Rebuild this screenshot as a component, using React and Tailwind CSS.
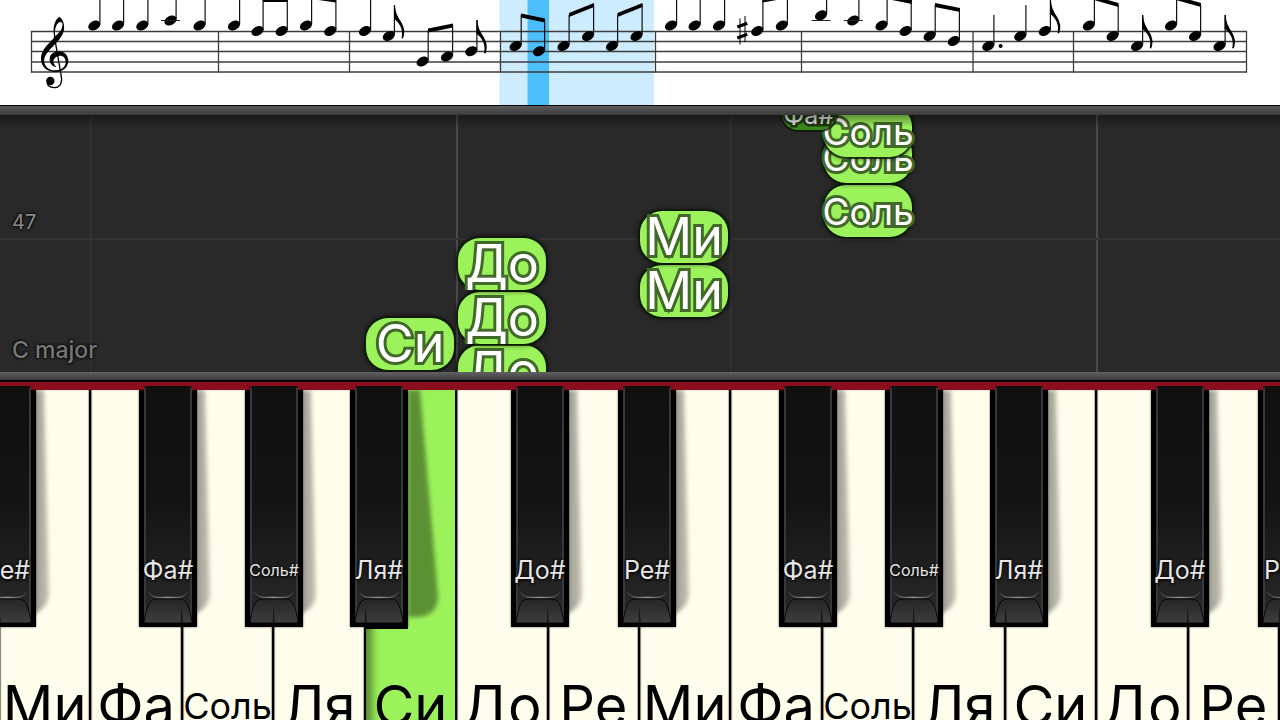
import React from "react";

const BAR_LINES = [31.5, 218.5, 349.5, 500.5, 655.5, 801.5, 973, 1073.5, 1246.5];
const STAFF_LINES = [31.5, 41.5, 51.5, 62, 72];

// x and y of the head, y of the stem top, optional flag, ledger line or dot
const NOTES = [
  { x: 94.3, y: 25.5, top: -5 },
  { x: 118, y: 25.5, top: -5 },
  { x: 142.3, y: 25.5, top: -5 },
  { x: 170.5, y: 20.5, top: -5, ledger: 20.5 },
  { x: 199.5, y: 25.5, top: -5 },
  { x: 234, y: 25.5, top: -5 },
  { x: 257.5, y: 31, top: 0 },
  { x: 281.7, y: 31, top: 0 },
  { x: 306, y: 25.5, top: -5 },
  { x: 330.3, y: 31, top: 0 },
  { x: 365, y: 31, top: -5 },
  { x: 388.8, y: 36, top: 5, flag: true },
  { x: 422.6, y: 61.5, top: 30 },
  { x: 447, y: 56.5, top: 25 },
  { x: 471.3, y: 51.2, top: 20, flag: true },
  { x: 515.6, y: 46, top: 15 },
  { x: 539, y: 51.2, top: 20 },
  { x: 563.5, y: 46, top: 15 },
  { x: 588, y: 36, top: 5 },
  { x: 612, y: 46, top: 15 },
  { x: 636.5, y: 36, top: 5 },
  { x: 671, y: 25.5, top: -5 },
  { x: 694.6, y: 25.5, top: -5 },
  { x: 719, y: 25.5, top: -5 },
  { x: 757.3, y: 31, top: 0 },
  { x: 781.8, y: 25.5, top: -5 },
  { x: 821, y: 15.3, top: -5, ledger: 20.5 },
  { x: 853.3, y: 20.5, top: -5, ledger: 20.5 },
  { x: 881.5, y: 25.5, top: -5 },
  { x: 905.6, y: 31, top: 0 },
  { x: 929.6, y: 36, top: 5 },
  { x: 953.8, y: 41, top: 10 },
  { x: 988.3, y: 46, top: 15, dot: true },
  { x: 1020.3, y: 36, top: 5 },
  { x: 1044.8, y: 31, top: 0, flag: true },
  { x: 1088.8, y: 25.5, top: -5 },
  { x: 1112.6, y: 36, top: 5 },
  { x: 1137, y: 46, top: 15, flag: true },
  { x: 1171, y: 25.5, top: -5 },
  { x: 1195, y: 36, top: 5 },
  { x: 1219.5, y: 46, top: 15, flag: true },
];

const BEAMS = [
  [263, -2, 288, -2],
  [311.5, -5, 336, -1.5],
  [428, 28.5, 453, 23.5],
  [521, 13.5, 545, 18.5],
  [569, 13, 594, 3],
  [617.5, 13, 642.5, 3],
  [762.5, -1.5, 788, -6],
  [887, -5, 912, 0],
  [935, 3, 960, 8],
  [1094, -4, 1118.5, 3],
  [1176, -4, 1201, 3],
];

function TrebleClef() {
  return (
    <g transform="scale(0.3333)">
      <path
        fillRule="evenodd"
        d="M163 112 C157 85 163 60 178 50 C190 58 194 76 192 88 C189 110 172 126 158 140 C140 157 130 172 133 188 C137 204 152 212 168 211 C186 210 197 200 197 186 C197 172 186 166 177 168 C163 170 158 182 161 190 C163 196 168 199 168 201 C158 199 148 190 149 176 C150 163 162 154 177 154 C194 154 206 168 205 184 C204 203 188 216 166 216 C142 216 123 200 123 176 C123 156 135 142 148 128 C155 121 161 115 163 112 Z M166 108 C162 88 169 66 183 66 C190 68 188 82 183 90 C179 97 172 103 166 108 Z"
      />
      <path d="M163 108 L184 230 C188 252 176 264 162 263 C150 262 142 256 141 246" fill="none" stroke="#000" strokeWidth="4" />
      <circle cx="151" cy="243" r="12.5" />
    </g>
  );
}

function Score() {
  return (
    <svg viewBox="0 0 1280 105" className="block h-auto w-full shrink-0 bg-white" role="img" aria-label="Ноты">
      <rect x="499.5" y="0" width="154.5" height="105" fill="#cdecff" />
      <rect x="527.5" y="0" width="21.5" height="105" fill="#4cbffb" />
      <g stroke="#3c3c3c" strokeWidth="1.3">
        {STAFF_LINES.map((y) => (
          <line key={y} x1="31" x2="1247" y1={y} y2={y} />
        ))}
        {BAR_LINES.map((x) => (
          <line key={x} x1={x} x2={x} y1="31" y2="72.5" />
        ))}
      </g>
      <TrebleClef />
      {BEAMS.map(([x1, y1, x2, y2]) => (
        <polygon key={x1} points={`${x1},${y1} ${x2},${y2} ${x2},${y2 + 4} ${x1},${y1 + 4}`} />
      ))}
      {NOTES.map((n) => (
        <g key={n.x}>
          <ellipse cx={n.x} cy={n.y} rx="6.4" ry="4.6" transform={`rotate(-27 ${n.x} ${n.y})`} />
          <line x1={n.x + 5.6} x2={n.x + 5.6} y1={n.y - 1} y2={n.top} stroke="#111" strokeWidth="1.2" />
          {n.ledger && <line x1={n.x - 9.5} x2={n.x + 9.5} y1={n.ledger} y2={n.ledger} stroke="#222" strokeWidth="1" />}
          {n.dot && <circle cx={n.x + 12.3} cy={n.y} r="2" />}
          {n.flag && (
            <path
              transform={`translate(${n.x + 5.2} ${n.top})`}
              d="M0 0 H1 C1.500 8 3.500 11 6.500 16 C11 23 11 28 9 33.500 L7.500 33 C9 27 7.500 22 4 17.500 C2.500 15.500 1 14.500 0 14 Z"
            />
          )}
        </g>
      ))}
      <g stroke="#000">
        <path d="M740 18.500 V44.500 M745 16 V42" strokeWidth="1" />
        <path d="M737.300 27 L747.300 23.300 M737.300 38 L747.300 34.300" strokeWidth="3.2" />
      </g>
    </svg>
  );
}

// Earliest note first: later notes lie over earlier ones.
const FALLING = [
  { text: "До", left: 458, top: 230, size: "text-[52px]" },
  { text: "Си", left: 366, top: 203, size: "text-[52px]" },
  { text: "До", left: 458, top: 177, size: "text-[52px]" },
  { text: "До", left: 458, top: 123, size: "text-[52px]" },
  { text: "Ми", left: 640, top: 150, size: "text-[52px]" },
  { text: "Ми", left: 640, top: 96, size: "text-[52px]" },
  { text: "Соль", left: 824, top: 70, size: "text-[37px]" },
  { text: "Соль", left: 824, top: 16, size: "text-[37px]" },
  { text: "Соль", left: 824, top: -10, size: "text-[37px]" },
];

function Guide({ x, strong }) {
  return (
    <div
      className={strong ? "absolute inset-y-0 w-0.5 bg-[#4a4a4a]" : "absolute inset-y-0 w-0.5 bg-[#303030]"}
      style={{ left: `${(x / 1280) * 100}%` }}
    />
  );
}

function PianoRoll() {
  return (
    <section className="relative h-[257px] shrink-0 overflow-hidden bg-[#292929]">
      <Guide x={89.5} />
      <Guide x={455.5} strong />
      <Guide x={729.5} />
      <Guide x={1095.5} strong />
      <div className="absolute inset-x-0 top-[123px] h-0.5 bg-[#333]" />
      <div className="relative flex h-full flex-col justify-end gap-[100px] pb-2 pl-3 leading-7 [text-shadow:0_0_3px_#000,0_0_3px_#000]">
        <p className="text-xl text-[#8c8c8c]">47</p>
        <p className="text-[23px] font-medium text-[#777]">C major</p>
      </div>
      {FALLING.map((n) => (
        <div
          key={`${n.left}-${n.top}`}
          className="absolute h-[52px] w-[6.9%] rounded-[22px] bg-[#9bf25a] shadow-[0_0_0_2px_rgba(10,25,0,0.75),0_0_4px_2px_rgba(0,0,0,0.5)]"
          style={{ left: `${(n.left / 1280) * 100}%`, top: n.top }}
        >
          <span
            className={`flex h-[52px] items-center justify-center overflow-y-clip whitespace-nowrap leading-none text-white [-webkit-text-stroke:6px_#41692a] [paint-order:stroke_fill] ${n.size}`}
          >
            {n.text}
          </span>
        </div>
      ))}
      <div
        className="absolute -top-[18px] flex h-[33px] w-[4.2%] items-center justify-center whitespace-nowrap rounded-2xl bg-[#3d8a1c] pt-1 text-[25px] leading-none text-[#eee] shadow-[0_0_0_2px_rgba(10,25,0,0.75)] [-webkit-text-stroke:5px_#1d3a10] [paint-order:stroke_fill]"
        style={{ left: `${(782 / 1280) * 100}%` }}
      >
        Фа#
      </div>
      <div className="absolute inset-x-0 top-0 h-3 bg-linear-to-b from-black/40 to-transparent" />
    </section>
  );
}

const BIG = "text-[56px]";
const SMALL = "text-[36px]";
const WHITE_KEYS = ["Ми", "Фа", "Соль", "Ля", "Си", "До", "Ре", "Ми", "Фа", "Соль", "Ля", "Си", "До", "Ре"];
const PRESSED = 4;

const BLACK_KEYS = [
  { text: "Ре#", left: -22, seam: 22 },
  { text: "Фа#", left: 139, seam: 43 },
  { text: "Соль#", left: 245, seam: 29 },
  { text: "Ля#", left: 350, seam: 16, deep: true },
  { text: "До#", left: 511, seam: 37 },
  { text: "Ре#", left: 618, seam: 22 },
  { text: "Фа#", left: 779, seam: 43 },
  { text: "Соль#", left: 885, seam: 29 },
  { text: "Ля#", left: 990, seam: 16 },
  { text: "До#", left: 1151, seam: 37 },
  { text: "Ре#", left: 1258, seam: 22 },
];

function BlackKey({ text, left, seam, deep }) {
  return (
    <button
      type="button"
      className="absolute top-0 flex h-[237px] w-[58px] items-start justify-center bg-black pt-[164px] shadow-[0_0_2px_rgba(0,0,0,0.6)]"
      style={{ left: `${(left / 1280) * 100}%` }}
    >
      <svg width="100" height="245" viewBox="0 0 100 245" className="pointer-events-none absolute left-full top-0" aria-hidden="true">
        <defs>
          <linearGradient id="cast" x1="0" y1="0" x2="1" y2="0">
            <stop offset="0" stopColor="#000" stopOpacity="0.42" />
            <stop offset="1" stopColor="#000" stopOpacity="0.22" />
          </linearGradient>
        </defs>
        {deep ? (
          <path d="M0 0 H12 L30 205 Q30 226 10 227 H0 Z" fill="#000" opacity="0.4" className="blur-[2px]" />
        ) : (
          <path d="M-4 0 H8 L13 205 Q12 218 -4 225 Z" fill="url(#cast)" className="blur-[2px]" />
        )}
      </svg>
      {deep && <span className="absolute inset-x-0 left-3.5 top-full h-0.5 bg-black" />}
      <span className="absolute inset-x-[5px] -top-1 bottom-1 overflow-hidden rounded-t-[3px] bg-linear-to-b from-[#101010] via-[#141414] to-[#2a2a2a]">
        <svg width="48" height="237" viewBox="0 0 48 237" className="block" aria-hidden="true">
          <defs>
            <linearGradient id="cap" x1="0" y1="0" x2="0" y2="1">
              <stop offset="0" stopColor="#262626" />
              <stop offset="1" stopColor="#3e3e3e" />
            </linearGradient>
            <linearGradient id="ridge" x1="0" y1="0" x2="1" y2="0">
              <stop offset="0" stopColor="#333" />
              <stop offset="0.5" stopColor="#999" />
              <stop offset="1" stopColor="#333" />
            </linearGradient>
          </defs>
          <path d="M1 2 V236 M47 2 V236" stroke="#38383b" strokeWidth="2" />
          <path d="M4 206 Q8 211 14 211.500 H34 Q40 211 44 206" fill="none" stroke="url(#ridge)" strokeWidth="1.3" />
          <path d="M0 235 Q3 217 8 214 Q10 213 14 213 H34 Q38 213 40 214 Q45 217 48 235 Q47 237 45 237 H3 Q1 237 0 235 Z" fill="url(#cap)" stroke="#080808" strokeWidth="1" />
          <path d={`M${seam - 5.5} 219 L${seam - 4.3} 237 H${seam - 6.3} Z`} fill="#161616" />
        </svg>
      </span>
      <span
        className={`relative whitespace-nowrap leading-8 text-[#e6e6e6] [text-shadow:0_0_3px_#000,0_1px_3px_#000] ${
          text.length > 4 ? "text-[16px]" : "text-[25px]"
        }`}
      >
        {text}
      </span>
    </button>
  );
}

function Keyboard() {
  return (
    <section className="flex flex-1 flex-col bg-[#8b0e1f] pt-2">
      <div className="relative grid flex-1 grid-cols-[repeat(14,minmax(0,1fr))]">
        {WHITE_KEYS.map((text, i) => (
          <button
            key={i}
            type="button"
            aria-pressed={i === PRESSED}
            className={`flex min-w-0 items-start justify-center whitespace-nowrap border-r-2 border-black pt-[286px] leading-[60px] text-black ${
              i === PRESSED
                ? "bg-[#9bf25a] shadow-[inset_12px_0_8px_-6px_rgba(0,0,0,0.45)]"
                : "bg-[#fffeec] shadow-[inset_1px_0_1px_rgba(0,0,0,0.5),inset_-1px_0_1px_rgba(0,0,0,0.3)]"
            } ${text.length > 2 ? SMALL : BIG}`}
          >
            {text}
          </button>
        ))}
        {BLACK_KEYS.map((k) => (
          <BlackKey key={k.left} {...k} />
        ))}
      </div>
    </section>
  );
}

export default function App() {
  return (
    <main className="flex h-screen flex-col overflow-hidden bg-black font-['Inter','Noto_Sans',sans-serif]">
      <Score />
      <div className="h-2.5 shrink-0 border-t border-black bg-linear-to-b from-[#5c5c5c] to-[#3a3a3a]" />
      <PianoRoll />
      <div className="h-2.5 shrink-0 border-b-2 border-black bg-linear-to-b from-[#616163] to-[#3c3c3e]" />
      <Keyboard />
    </main>
  );
}
